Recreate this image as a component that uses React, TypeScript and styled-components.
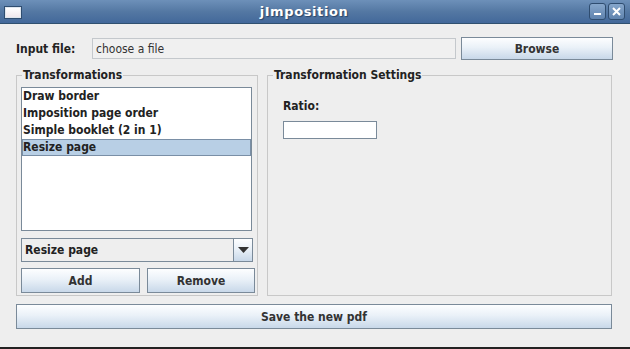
import React from 'react'
import styled, { createGlobalStyle } from 'styled-components'

const GlobalStyle = createGlobalStyle`
  html, body {
    margin: 0;
    padding: 0;
    background: #eeeeee;
  }
`

const font = `'DejaVu Sans Condensed', 'DejaVu Sans', 'Liberation Sans', sans-serif`

const Window = styled.div`
  width: 630px;
  height: 349px;
  box-sizing: border-box;
  display: flex;
  flex-direction: column;
  background: #eeeeee;
  border-bottom: 2px solid #222;
  font-family: ${font};
  font-size: 12px;
  color: #222;
  overflow: hidden;
`

const TitleBar = styled.div`
  height: 24px;
  flex: none;
  display: flex;
  align-items: center;
  padding: 0 5px;
  background: linear-gradient(#6d90b9, #5478a3 50%, #43689a);
  border-bottom: 1px solid #30506f;
  box-sizing: border-box;
`

const WindowIcon = styled.div`
  width: 14px;
  height: 9px;
  border: 1px solid #dfe6ee;
  background: linear-gradient(#fff, #f0e8ee);
  box-shadow: 0 0 0 1px #2f4d70;
  margin-top: 2px;
`

const Title = styled.div`
  flex: 1;
  text-align: center;
  color: #fff;
  font-family: 'DejaVu Sans', sans-serif;
  font-weight: bold;
  font-size: 13px;
  letter-spacing: 0.6px;
  text-shadow: 1px 1px 1px #2a4466;
`

const TitleButton = styled.div`
  width: 17px;
  height: 17px;
  margin-left: 2px;
  border: 1px solid #2f4d70;
  border-radius: 3px;
  background: linear-gradient(#86a6cb, #5f83ae);
  display: flex;
  align-items: center;
  justify-content: center;
  box-sizing: border-box;
`

const Body = styled.div`
  flex: 1;
  display: flex;
  flex-direction: column;
  padding: 13px 18px 0 16px;
`

const InputRow = styled.div`
  display: flex;
  align-items: center;
  height: 23px;
`

const Label = styled.div<{ $width?: number }>`
  font-weight: bold;
  width: ${(p) => (p.$width ? `${p.$width}px` : 'auto')};
  flex: none;
`

const TextField = styled.div<{ $width: number; $height: number; $tone?: string }>`
  width: ${(p) => p.$width}px;
  height: ${(p) => p.$height}px;
  box-sizing: border-box;
  border: 1px solid ${(p) => p.$tone || '#7a8a99'};
  background: ${(p) => (p.$tone ? '#f0f0f0' : '#fff')};
  color: #333;
  padding-left: 3px;
  display: flex;
  align-items: center;
  flex: none;
`

const Button = styled.div<{ $width?: number }>`
  width: ${(p) => (p.$width ? `${p.$width}px` : 'auto')};
  height: 100%;
  box-sizing: border-box;
  border: 1px solid #7a8a99;
  background: linear-gradient(#fdfeff, #eaf1f8 45%, #c8d8e9);
  display: flex;
  align-items: center;
  justify-content: center;
  font-weight: bold;
  color: #333;
  flex: none;
`

const Spacer = styled.div`
  width: 5px;
  flex: none;
`

const Panels = styled.div`
  display: flex;
  margin-top: 9px;
  height: 227px;
  gap: 9px;
`

const Group = styled.fieldset<{ $width: number }>`
  width: ${(p) => p.$width}px;
  box-sizing: border-box;
  margin: 0;
  border: 1px solid #c8c8c8;
  padding: 0 4px 1px 4px;
  display: flex;
  flex-direction: column;
  min-width: 0;

  legend {
    font-weight: bold;
    padding: 0 1px;
    margin-left: 1px;
    line-height: 13px;
  }
`

const List = styled.div`
  height: 144px;
  border: 1px solid #7a8a99;
  background: #fff;
  box-sizing: border-box;
  margin-top: 5px;
  margin-right: 1px;
`

const ListItem = styled.div<{ $selected?: boolean }>`
  height: 17px;
  line-height: 17px;
  padding-left: 1px;
  font-weight: bold;
  color: #222;
  background: ${(p) => (p.$selected ? '#b8cfe5' : 'transparent')};
  box-shadow: ${(p) => (p.$selected ? 'inset 0 0 0 1px #7a8fa6' : 'none')};
`

const Combo = styled.div`
  margin-top: 7px;
  height: 24px;
  display: flex;
  border: 1px solid #7a8a99;
  box-sizing: border-box;
  background: #eeeeee;
`

const ComboText = styled.div`
  flex: 1;
  display: flex;
  align-items: center;
  padding-left: 3px;
  font-weight: bold;
`

const ComboArrow = styled.div`
  width: 18px;
  border-left: 1px solid #7a8a99;
  background: linear-gradient(#fdfeff, #eaf1f8 45%, #c8d8e9);
  display: flex;
  align-items: center;
  justify-content: center;
`

const ButtonRow = styled.div`
  margin-top: 6px;
  height: 25px;
  display: flex;
  gap: 7px;
`

const Settings = styled.div`
  padding: 17px 0 0 11px;
  display: flex;
  flex-direction: column;
  gap: 8px;
`

const SaveRow = styled.div`
  margin-top: 8px;
  height: 25px;
  display: flex;
`

const WideButton = styled(Button)`
  flex: 1;
`

export default function App() {
  return (
    <>
      <GlobalStyle />
      <Window>
        <TitleBar>
          <WindowIcon />
          <Title>jImposition</Title>
          <TitleButton>
            <svg width='9' height='9' viewBox='0 0 9 9'>
              <rect x='1' y='6' width='7' height='2' fill='#fff' />
            </svg>
          </TitleButton>
          <TitleButton>
            <svg width='9' height='9' viewBox='0 0 9 9'>
              <path d='M1 1L8 8M8 1L1 8' stroke='#fff' strokeWidth='2' />
            </svg>
          </TitleButton>
        </TitleBar>
        <Body>
          <InputRow>
            <Label $width={76}>Input file:</Label>
            <TextField $width={364} $height={21} $tone='#c4c8cc'>
              choose a file
            </TextField>
            <Spacer />
            <Button $width={152}>Browse</Button>
          </InputRow>
          <Panels>
            <Group $width={242}>
              <legend>Transformations</legend>
              <List>
                <ListItem>Draw border</ListItem>
                <ListItem>Imposition page order</ListItem>
                <ListItem>Simple booklet (2 in 1)</ListItem>
                <ListItem $selected>Resize page</ListItem>
              </List>
              <Combo>
                <ComboText>Resize page</ComboText>
                <ComboArrow>
                  <svg width='11' height='6' viewBox='0 0 11 6'>
                    <path d='M0 0H11L5.5 6Z' fill='#333' />
                  </svg>
                </ComboArrow>
              </Combo>
              <ButtonRow>
                <Button $width={119}>Add</Button>
                <Button $width={108}>Remove</Button>
              </ButtonRow>
            </Group>
            <Group $width={345}>
              <legend>Transformation Settings</legend>
              <Settings>
                <Label>Ratio:</Label>
                <TextField $width={94} $height={18} />
              </Settings>
            </Group>
          </Panels>
          <SaveRow>
            <WideButton>Save the new pdf</WideButton>
          </SaveRow>
        </Body>
      </Window>
    </>
  )
}
